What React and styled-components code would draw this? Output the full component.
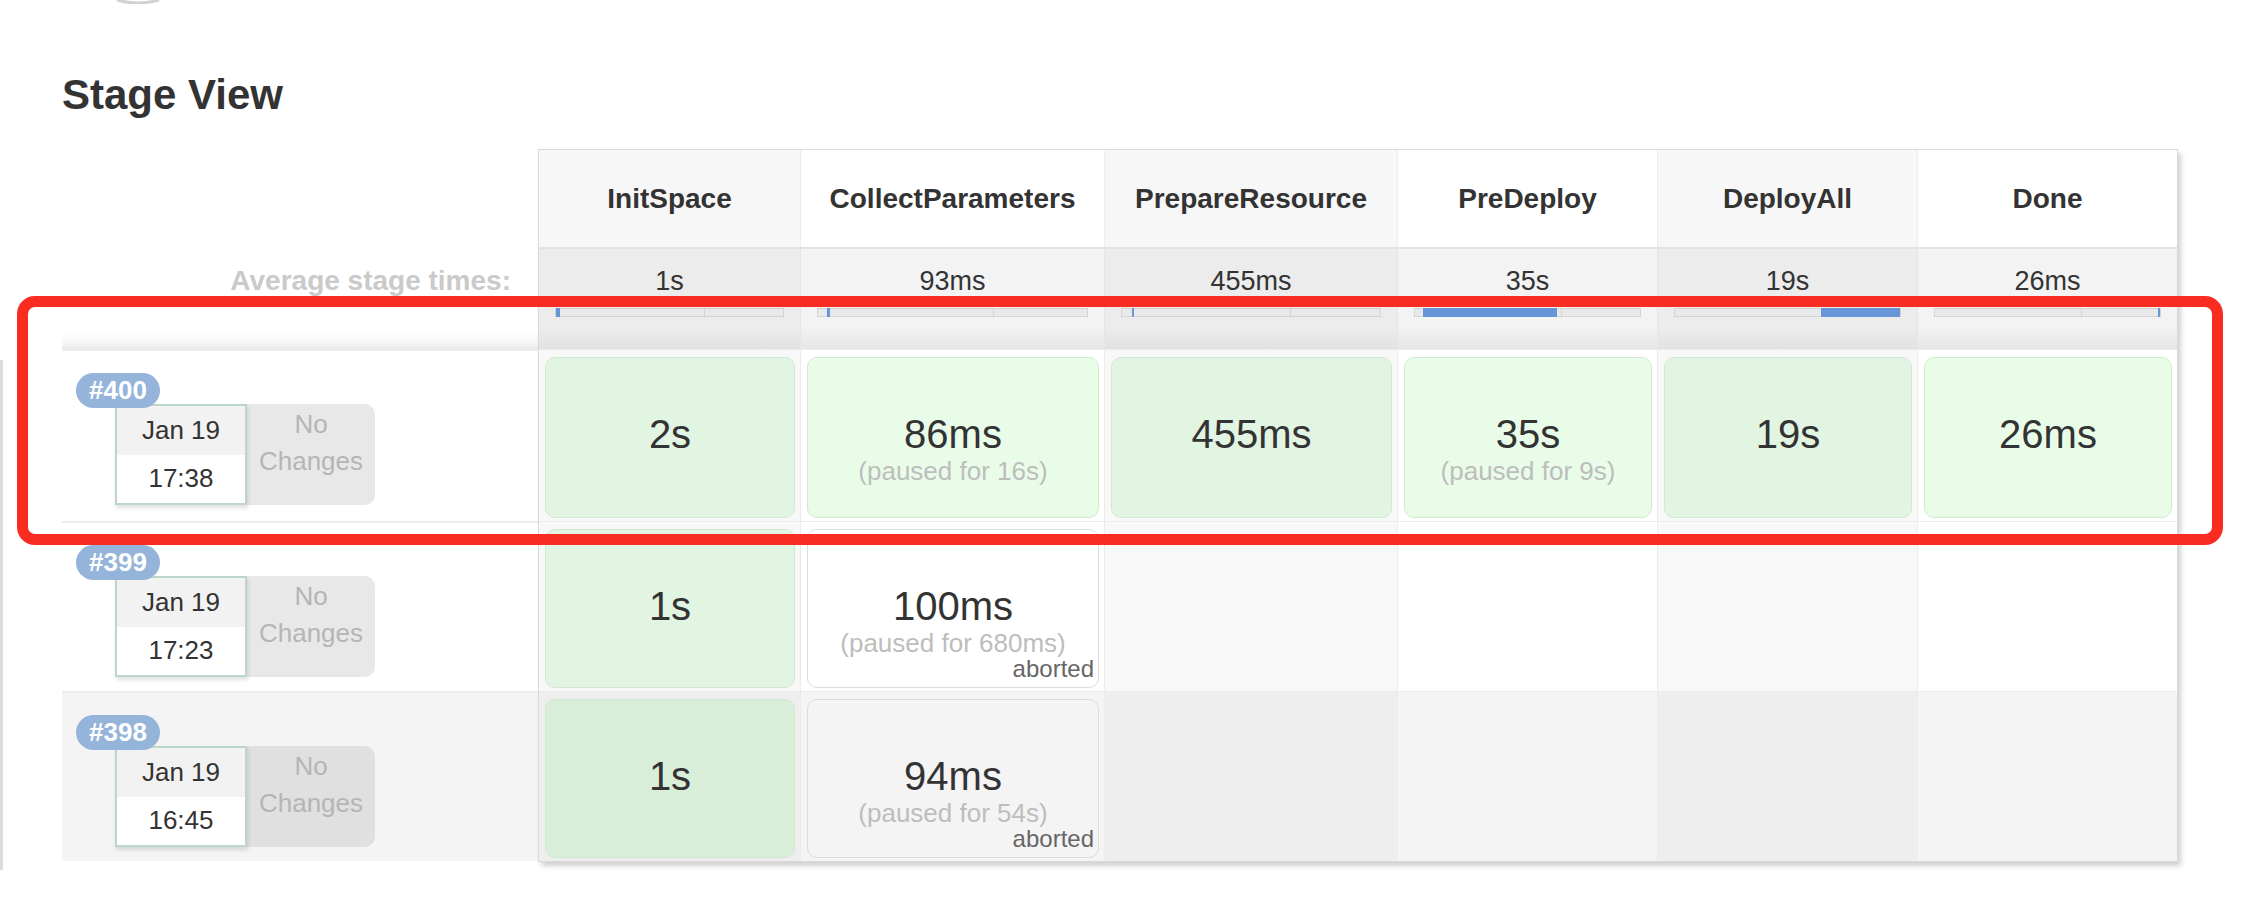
import styled, { createGlobalStyle } from "styled-components";

const GlobalStyle = createGlobalStyle`
    html, body {
        margin: 0;
        padding: 0;
        background: #fff;
    }
    body {
        font-family: "Liberation Sans", Arial, Helvetica, sans-serif;
        color: #333;
    }
`;

const Page = styled.div`
    position: relative;
    display: flex;
    width: 2256px;
    min-height: 906px;
`;

const EdgeLine = styled.div`
    flex-shrink: 0;
    width: 3px;
    height: 510px;
    margin-top: 360px;
    background: #dcdcdc;
`;

const Main = styled.div`
    display: flex;
    flex-direction: column;
    padding-left: 59px;
`;

const TopArc = styled.svg`
    display: block;
    margin-left: 53px;
`;

const Title = styled.h2`
    margin: 67px 0 30px;
    font-size: 42px;
    line-height: 48px;
    font-weight: 700;
    color: #333;
`;

const StageView = styled.div`
    display: flex;
    align-items: flex-start;
`;

const LeftCol = styled.div`
    width: 476px;
    display: flex;
    flex-direction: column;
`;

const HeadSpacer = styled.div`
    height: 98px;
`;

const AvgLabel = styled.div`
    height: 102px;
    box-sizing: border-box;
    padding: 18px 27px 0 0;
    text-align: right;
    font-size: 28px;
    line-height: 32px;
    font-weight: 700;
    color: #cacaca;
    background: linear-gradient(to bottom, #fff 0%, #fff 82%, #f8f8f8 92%, #ebebeb 100%);
`;

const BuildRow = styled.div`
    height: ${(p) => p.$h}px;
    box-sizing: border-box;
    padding: 22px 0 0 14px;
    background: ${(p) => (p.$shaded ? "#f4f4f4" : "#fff")};
    border-top: 2px solid #ededed;
`;

const Badge = styled.div`
    position: relative;
    z-index: 2;
    display: inline-flex;
    align-items: center;
    height: 35px;
    padding: 0 13px;
    border-radius: 18px;
    background: #94b4da;
    color: #fff;
    font-size: 26px;
    font-weight: 700;
`;

const BuildInfo = styled.div`
    display: flex;
    margin: -4px 0 0 39px;
`;

const DateBox = styled.div`
    position: relative;
    z-index: 1;
    width: 132px;
    height: 101px;
    box-sizing: border-box;
    display: flex;
    flex-direction: column;
    border: 2px solid #bdd6ca;
    background: #fff;
    box-shadow: 1px 3px 4px rgba(0, 0, 0, 0.12);
    font-size: 26px;
    color: #333;
`;

const DatePart = styled.div`
    flex: 1;
    display: flex;
    align-items: center;
    justify-content: center;
    background: ${(p) => (p.$top ? "#f2f2f2" : "#fff")};
`;

const ChangesBox = styled.div`
    width: 128px;
    height: 101px;
    box-sizing: border-box;
    padding-top: 2px;
    border-radius: 0 10px 10px 0;
    background: ${(p) => (p.$shaded ? "#e0e0e0" : "#e8e8e8")};
    color: #b5b5b5;
    font-size: 26px;
    line-height: 37px;
    text-align: center;
`;

const Table = styled.div`
    display: grid;
    grid-template-columns: 261px 304px 293px 260px 260px 260px;
    grid-template-rows: 97px 102px 172px 170px 170px;
    border: 1px solid #d9d9d9;
    box-shadow: 3px 4px 5px rgba(0, 0, 0, 0.18);
`;

const HeadCell = styled.div`
    display: flex;
    align-items: center;
    justify-content: center;
    background: ${(p) => (p.$odd ? "#f7f7f7" : "#fff")};
    border-left: ${(p) => (p.$first ? "none" : "1px solid #ededed")};
    font-size: 28px;
    font-weight: 700;
    color: #333;
`;

const AvgCell = styled.div`
    display: flex;
    flex-direction: column;
    align-items: center;
    box-sizing: border-box;
    padding-top: 16px;
    border-top: 2px solid #e2e2e2;
    border-left: ${(p) => (p.$first ? "none" : "1px solid #e6e6e6")};
    background: ${(p) =>
        p.$odd
            ? "linear-gradient(to bottom, #ececec 0%, #ececec 78%, #e2e2e2 100%)"
            : "linear-gradient(to bottom, #f3f3f3 0%, #f3f3f3 78%, #e6e6e6 100%)"};
`;

const AvgTime = styled.div`
    font-size: 27px;
    line-height: 32px;
    color: #333;
`;

const Track = styled.div`
    position: relative;
    width: calc(100% - 32px);
    height: 9px;
    margin-top: 11px;
    box-sizing: border-box;
    background: #e9e9e9;
    border: 1px solid #d4d4d4;
    border-top-color: #cfcfcf;
`;

const TrackDivider = styled.div`
    position: absolute;
    top: 0;
    bottom: 0;
    left: 65%;
    width: 1px;
    background: #d2d2d2;
`;

const TrackFill = styled.div`
    position: absolute;
    top: -1px;
    bottom: -1px;
    background: #6796d8;
`;

const StageCell = styled.div`
    box-sizing: border-box;
    padding: 7px 5px 3px 6px;
    border-top: 1px solid #ececec;
    border-left: ${(p) => (p.$first ? "none" : "1px solid #ececec")};
    background: ${(p) =>
        p.$shaded ? (p.$odd ? "#eeeeee" : "#f4f4f4") : p.$odd ? "#f8f8f8" : "#fff"};
`;

const successBg = (p) => {
    if (p.$shaded) return p.$odd ? "#d9eed9" : "#dff5df";
    return p.$odd ? "#e2f5e2" : "#e8fce8";
};

const StageBox = styled.div`
    height: 100%;
    box-sizing: border-box;
    display: flex;
    flex-direction: column;
    align-items: center;
    padding-top: 52px;
    border-radius: 10px;
    border: 1px solid ${(p) => (p.$aborted ? "#dcdcdc" : "#d3e8d3")};
    background: ${(p) =>
        p.$aborted ? (p.$shaded ? "#f4f4f4" : "#fff") : successBg(p)};
`;

const Duration = styled.div`
    font-size: 40px;
    line-height: 48px;
    color: #333;
`;

const Paused = styled.div`
    font-size: 26px;
    line-height: 26px;
    color: #bdbdbd;
`;

const Aborted = styled.div`
    align-self: stretch;
    padding-right: 4px;
    text-align: right;
    font-size: 24px;
    line-height: 26px;
    color: #666;
`;

const Highlight = styled.div`
    position: absolute;
    left: 17px;
    top: 296px;
    width: 2206px;
    height: 249px;
    box-sizing: border-box;
    border: 11px solid #fa2b20;
    border-radius: 18px;
    pointer-events: none;
`;

const stages = [
    { name: "InitSpace", avg: "1s", bar: [0, 1.8] },
    { name: "CollectParameters", avg: "93ms", bar: [3.4, 4.3] },
    { name: "PrepareResource", avg: "455ms", bar: [3.8, 4.5] },
    { name: "PreDeploy", avg: "35s", bar: [3.5, 63] },
    { name: "DeployAll", avg: "19s", bar: [65, 100] },
    { name: "Done", avg: "26ms", bar: [99.2, 100] },
];

const builds = [
    {
        id: 400,
        time: "17:38",
        height: 172,
        cells: [
            { t: "2s" },
            { t: "86ms", paused: "16s" },
            { t: "455ms" },
            { t: "35s", paused: "9s" },
            { t: "19s" },
            { t: "26ms" },
        ],
    },
    {
        id: 399,
        time: "17:23",
        height: 170,
        cells: [{ t: "1s" }, { t: "100ms", paused: "680ms", aborted: true }, null, null, null, null],
    },
    {
        id: 398,
        time: "16:45",
        height: 170,
        shaded: true,
        cells: [{ t: "1s" }, { t: "94ms", paused: "54s", aborted: true }, null, null, null, null],
    },
];

function App() {
    return (
        <Page>
            <GlobalStyle />
            <EdgeLine />
            <Main>
                <TopArc width="46" height="4" viewBox="0 0 46 4">
                    <path d="M2 0 Q23 6 44 0" fill="none" stroke="#d2d2d2" strokeWidth="3" />
                </TopArc>
                <Title>Stage View</Title>
                <StageView>
                    <LeftCol>
                        <HeadSpacer />
                        <AvgLabel>Average stage times:</AvgLabel>
                        {builds.map((b) => (
                            <BuildRow key={b.id} $h={b.height} $shaded={b.shaded}>
                                <Badge>#{b.id}</Badge>
                                <BuildInfo>
                                    <DateBox>
                                        <DatePart $top>Jan 19</DatePart>
                                        <DatePart>{b.time}</DatePart>
                                    </DateBox>
                                    <ChangesBox $shaded={b.shaded}>
                                        No
                                        <br />
                                        Changes
                                    </ChangesBox>
                                </BuildInfo>
                            </BuildRow>
                        ))}
                    </LeftCol>
                    <Table>
                        {stages.map((s, i) => (
                            <HeadCell key={s.name} $odd={i % 2 === 0} $first={i === 0}>
                                {s.name}
                            </HeadCell>
                        ))}
                        {stages.map((s, i) => (
                            <AvgCell key={s.name} $odd={i % 2 === 0} $first={i === 0}>
                                <AvgTime>{s.avg}</AvgTime>
                                <Track>
                                    <TrackDivider />
                                    <TrackFill
                                        style={{
                                            left: `${s.bar[0]}%`,
                                            width: `${s.bar[1] - s.bar[0]}%`,
                                        }}
                                    />
                                </Track>
                            </AvgCell>
                        ))}
                        {builds.map((b) =>
                            b.cells.map((c, i) => (
                                <StageCell
                                    key={`${b.id}-${i}`}
                                    $odd={i % 2 === 0}
                                    $first={i === 0}
                                    $shaded={b.shaded}
                                >
                                    {c && (
                                        <StageBox
                                            $odd={i % 2 === 0}
                                            $shaded={b.shaded}
                                            $aborted={c.aborted}
                                        >
                                            <Duration>{c.t}</Duration>
                                            {c.paused && <Paused>(paused for {c.paused})</Paused>}
                                            {c.aborted && <Aborted>aborted</Aborted>}
                                        </StageBox>
                                    )}
                                </StageCell>
                            ))
                        )}
                    </Table>
                </StageView>
            </Main>
            <Highlight />
        </Page>
    );
}

export default App;
